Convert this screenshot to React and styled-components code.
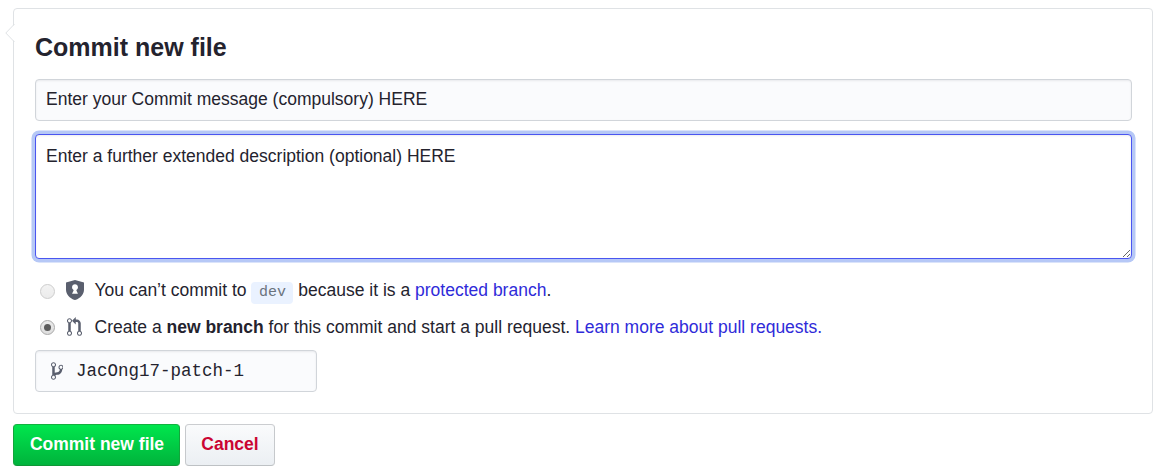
import React from "react";
import styled, { createGlobalStyle } from "styled-components";

const GlobalStyle = createGlobalStyle`
  * { box-sizing: border-box; }
  body {
    margin: 0;
    background: #fff;
    color: #24232e;
    font: 17.5px/26px "Liberation Sans", Arial, sans-serif;
  }
`;

const Form = styled.form`
  padding: 8px 10px 0 13px;
`;

const Panel = styled.section`
  position: relative;
  height: 406px;
  padding: 20px 20px 0 21px;
  border: 1px solid #dfe2e5;
  border-radius: 4px;
`;

const Caret = styled.svg`
  position: absolute;
  left: -9px;
  top: 14px;
  width: 10px;
  height: 20px;
`;

const Title = styled.h1`
  margin: 0 0 13px;
  font-size: 25px;
  line-height: 37px;
  font-weight: 700;
`;

const fieldStyles = `
  border: 1px solid #d1d5da;
  border-radius: 4px;
  background: #fafbfd;
  box-shadow: inset 0 1px 2px rgba(27, 31, 35, 0.075);
  color: #24232e;
  outline: none;
`;

const Summary = styled.input`
  ${fieldStyles}
  display: block;
  width: 100%;
  height: 42px;
  padding: 0 10px 2px;
  font: 17.5px "Liberation Sans", Arial, sans-serif;
`;

const Description = styled.textarea`
  ${fieldStyles}
  display: block;
  width: 100%;
  height: 125px;
  margin-top: 13px;
  padding: 8px 10px;
  font: 17.5px/26px "Liberation Sans", Arial, sans-serif;
  resize: vertical;
  background: #fff;
  border-color: #4a55f0;
  box-shadow: inset 0 1px 2px rgba(27, 31, 35, 0.075), 0 0 0 3.5px #b6c8f6;
`;

const Choices = styled.div`
  display: flex;
  flex-direction: column;
  gap: 11px;
  margin-top: 18px;
`;

const Choice = styled.label`
  display: flex;
  align-items: center;
  height: 26px;
  padding-left: 5px;
`;

const Radio = styled.span`
  display: flex;
  align-items: center;
  justify-content: center;
  width: 15px;
  height: 15px;
  margin-top: ${(p) => (p.$checked ? 1 : 3)}px;
  border: 1px solid ${(p) => (p.$checked ? "#a9a9a9" : "#cdcdcd")};
  border-radius: 50%;
  background: ${(p) =>
    p.$checked
      ? "linear-gradient(#eaeaea, #dedede)"
      : "linear-gradient(#f3f3f3, #ebebeb)"};

  &::after {
    content: "";
    display: ${(p) => (p.$checked ? "block" : "none")};
    width: 7px;
    height: 7px;
    border-radius: 50%;
    background: #5b5b5b;
  }
`;

const IconSlot = styled.span`
  display: flex;
  justify-content: center;
  width: 19.5px;
  margin: 0 10px 0 10px;
`;

const Icon = styled.svg`
  display: block;
  flex: none;
  fill: #5a5f6e;
`;

const Code = styled.code`
  padding: 2px 7.5px 3px;
  border-radius: 4px;
  background: #eaf2ff;
  color: #6a737d;
  font: 15px/20px "Liberation Mono", monospace;
`;

const Link = styled.a`
  color: #2f2bd9;
  text-decoration: none;
`;

const BranchField = styled.div`
  ${fieldStyles}
  display: flex;
  align-items: center;
  width: 282px;
  height: 42px;
  margin-top: 10px;
  padding-left: 14.5px;
`;

const BranchName = styled.span`
  margin-left: 13px;
  font: 17.5px/24px "Liberation Mono", monospace;
`;

const Actions = styled.div`
  display: flex;
  gap: 5px;
  margin-top: 10px;
`;

const Button = styled.button`
  width: ${(p) => (p.$primary ? 167 : 90)}px;
  height: 42px;
  padding: 0 0 2px ${(p) => (p.$primary ? 1 : 0)}px;
  border: 1px solid;
  border-color: ${(p) =>
    p.$primary ? "#12b23f #12a53b #0f9636" : "#cbcdd0 #c6c9cc #bdc1c4"};
  border-radius: 4px;
  background: ${(p) =>
    p.$primary
      ? "linear-gradient(#00e64d, #00b33c)"
      : "linear-gradient(#fafbfc, #ebeff3)"};
  color: ${(p) => (p.$primary ? "#fff" : "#cb0532")};
  font: 700 17.5px "Liberation Sans", Arial, sans-serif;
  white-space: nowrap;
`;

const ShieldLock = () => (
  <Icon width="18" height="20" viewBox="0 0 14 16" preserveAspectRatio="none">
    <path
      fillRule="evenodd"
      d="M7 0L0 2v6.02C0 12.69 5.31 16 7 16c1.69 0 7-3.31 7-7.98V2L7 0zM4.7 11l1.2-2.6a.568.568 0 0 0-.2-.69A2.3 2.3 0 0 1 4.7 5.7C4.7 4.4 5.75 3.4 7 3.4s2.3 1 2.3 2.3c0 .85-.4 1.6-1 2.01-.2.15-.3.4-.2.69L9.3 11H4.7z"
    />
  </Icon>
);

const PullRequest = () => (
  <Icon width="15" height="20" viewBox="0 0 12 16">
    <path
      fillRule="evenodd"
      d="M11 11.28V5c-.03-.78-.34-1.47-.94-2.06C9.46 2.35 8.78 2.03 8 2H7V0L4 3l3 3V4h1c.27.02.48.11.69.31.21.2.3.42.31.69v6.28A1.993 1.993 0 0 0 10 15a1.993 1.993 0 0 0 1-3.72zm-1 2.92c-.66 0-1.2-.55-1.2-1.2 0-.65.55-1.2 1.2-1.2.65 0 1.2.55 1.2 1.2 0 .65-.55 1.2-1.2 1.2zM4 3c0-1.11-.89-2-2-2a1.993 1.993 0 0 0-1 3.72v6.56A1.993 1.993 0 0 0 2 15a1.993 1.993 0 0 0 1-3.72V4.72c.59-.34 1-.98 1-1.72zm-.8 10c0 .66-.55 1.2-1.2 1.2-.65 0-1.2-.55-1.2-1.2 0-.65.55-1.2 1.2-1.2.65 0 1.2.55 1.2 1.2zM2 4.2C1.34 4.2.8 3.65.8 3c0-.65.55-1.2 1.2-1.2.65 0 1.2.55 1.2 1.2 0 .65-.55 1.2-1.2 1.2z"
    />
  </Icon>
);

const Branch = () => (
  <Icon width="12.5" height="20" viewBox="0 0 10 16">
    <path
      fillRule="evenodd"
      d="M10 5c0-1.11-.89-2-2-2a1.993 1.993 0 0 0-1 3.72v.3c-.02.52-.23.98-.63 1.38-.4.4-.86.61-1.38.63-.83.02-1.48.16-2 .45V4.72a1.993 1.993 0 0 0-1-3.72C.88 1 0 1.89 0 3a2 2 0 0 0 1 1.72v6.56c-.59.35-1 .99-1 1.72 0 1.11.89 2 2 2 1.11 0 2-.89 2-2 0-.53-.2-1-.53-1.36.09-.06.48-.41.59-.47.25-.11.56-.17.94-.17 1.05-.05 1.95-.45 2.75-1.25S8.95 7.77 9 6.73h-.02C9.59 6.37 10 5.73 10 5zM2 1.8c.66 0 1.2.55 1.2 1.2 0 .65-.55 1.2-1.2 1.2C1.35 4.2.8 3.65.8 3c0-.65.55-1.2 1.2-1.2zm0 12.41c-.66 0-1.2-.55-1.2-1.2 0-.65.55-1.2 1.2-1.2.65 0 1.2.55 1.2 1.2 0 .65-.55 1.2-1.2 1.2zm6-8c-.66 0-1.2-.55-1.2-1.2 0-.65.55-1.2 1.2-1.2.65 0 1.2.55 1.2 1.2 0 .65-.55 1.2-1.2 1.2z"
    />
  </Icon>
);

export default function App() {
  return (
    <Form>
      <GlobalStyle />
      <Panel>
        <Caret viewBox="0 0 10 20">
          <path d="M10 1L1 10l9 9z" fill="#fff" />
          <path d="M9.5 1L0.8 10l8.7 9" fill="none" stroke="#dfe2e5" />
        </Caret>
        <Title>Commit new file</Title>
        <Summary defaultValue="Enter your Commit message (compulsory) HERE" />
        <Description defaultValue="Enter a further extended description (optional) HERE" />
        <Choices>
          <Choice>
            <Radio />
            <IconSlot><ShieldLock /></IconSlot>
            <span>
              You can’t commit to <Code>dev</Code> because it is a{" "}
              <Link>protected branch</Link>.
            </span>
          </Choice>
          <Choice>
            <Radio $checked />
            <IconSlot><PullRequest /></IconSlot>
            <span>
              Create a <strong>new branch</strong> for this commit and start a
              pull request. <Link>Learn more about pull requests.</Link>
            </span>
          </Choice>
        </Choices>
        <BranchField>
          <Branch />
          <BranchName>JacOng17-patch-1</BranchName>
        </BranchField>
      </Panel>
      <Actions>
        <Button type="button" $primary>Commit new file</Button>
        <Button type="button">Cancel</Button>
      </Actions>
    </Form>
  );
}
